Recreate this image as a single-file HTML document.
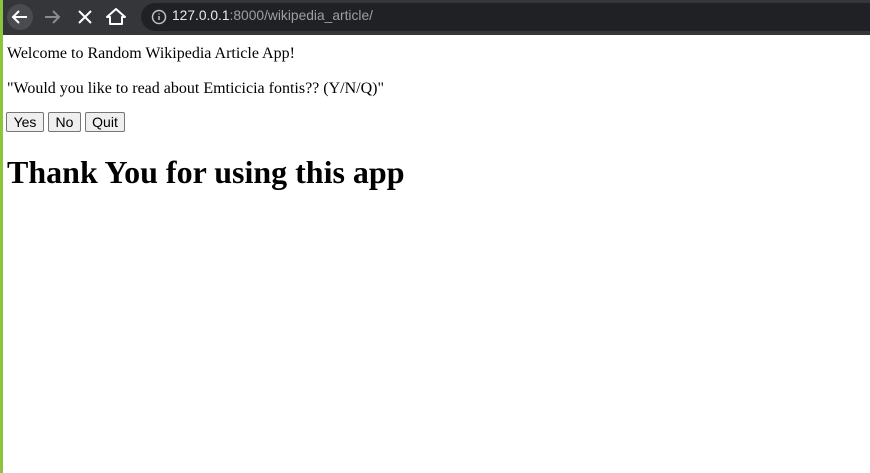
<!DOCTYPE html>
<html><head><meta charset="utf-8"><style>
html,body{margin:0;padding:0;width:870px;height:473px;overflow:hidden;background:#fff}
.strip{position:absolute;left:0;top:0;width:3px;height:473px;background:#8cc43c}
.bar{position:absolute;left:3px;top:0;width:867px;height:35px;background:#35363a}
.addr{position:absolute;left:138px;top:3px;width:760px;height:28px;background:#202124;border-radius:14px}
.url{position:absolute;left:172px;top:8px;font:13.8px "Liberation Sans",sans-serif;color:#9aa0a6;white-space:nowrap}
.url b{font-weight:normal;color:#e8eaed}
.content{position:absolute;left:7px;top:35px;font-family:"Liberation Serif",serif;color:#000}
p{margin:0;font-size:16px;position:absolute;white-space:nowrap;left:0}
.btn{position:absolute;top:77px;height:20px;border:1px solid #767676;border-radius:2px;background:#efefef;font:14px "Liberation Sans",sans-serif;line-height:19px;text-align:center;box-sizing:border-box}
h1{position:absolute;left:0;top:119px;margin:0;font-size:32px;font-weight:bold;white-space:nowrap}
</style></head><body>
<div class="strip"></div>
<div class="bar">
<svg width="140" height="35" style="position:absolute;left:-3px;top:0">
<circle cx="20" cy="17" r="13" fill="#4a4b4f"/>
<path d="M27 17H13M19 11l-6 6 6 6" stroke="#fff" stroke-width="2" fill="none"/>
<path d="M59 17H45M53 11l6 6-6 6" stroke="#8a8b8e" stroke-width="2" fill="none"/>
<path d="M79 11l12 12M91 11L79 23" stroke="#fff" stroke-width="2" fill="none"/>
<path d="M110 24v-7h-3l9-8 9 8h-3v7z" stroke="#fff" stroke-width="2" fill="none" stroke-linejoin="round"/>
</svg>
<div class="addr"><svg width="20" height="20" style="position:absolute;left:8px;top:4px"><circle cx="10" cy="10" r="6.5" stroke="#bdc1c6" stroke-width="1.5" fill="none"/><path d="M10 9v4M10 6.5v1" stroke="#bdc1c6" stroke-width="1.5"/></svg></div>
<div class="url" style="left:169px"><b>127.0.0.1</b>:8000/wikipedia_article/</div>
</div>
<div class="content">
<p style="top:10px">Welcome to Random Wikipedia Article App!</p>
<p style="top:45px">"Would you like to read about Emticicia fontis?? (Y/N/Q)"</p>
<div class="btn" style="left:-1px;width:38px">Yes</div>
<div class="btn" style="left:41px;width:33px">No</div>
<div class="btn" style="left:78px;width:40px">Quit</div>
<h1>Thank You for using this app</h1>
</div>
</body></html>
